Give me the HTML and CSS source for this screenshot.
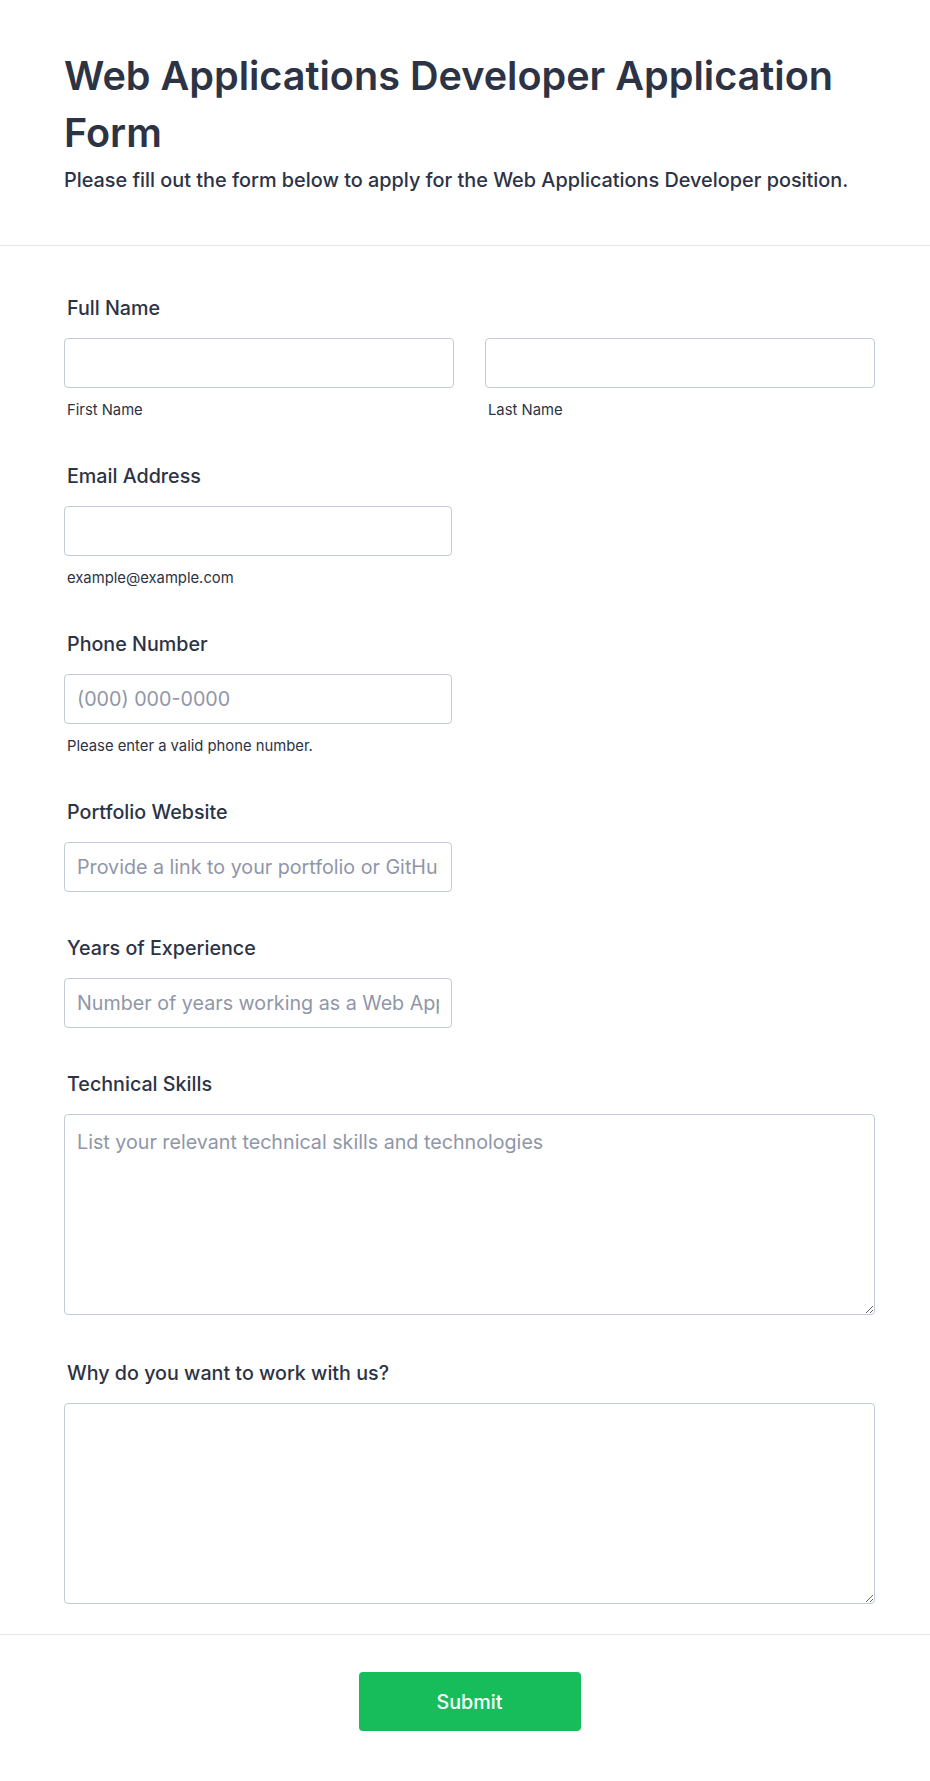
FILE: index.html
```html
<!DOCTYPE html>
<html lang="en">
<head>
<meta charset="utf-8">
<title>Web Applications Developer Application Form</title>
<link rel="stylesheet" href="styles.css">
</head>
<body>
<div class="page">
  <header class="header">
    <h1 class="title">Web Applications Developer Application Form</h1>
    <p class="subtitle">Please fill out the form below to apply for the Web Applications Developer position.</p>
  </header>
  <form class="form">
    <div class="field">
      <label class="label">Full Name</label>
      <div class="name-row">
        <div class="name-col">
          <input class="input" type="text">
          <span class="sublabel">First Name</span>
        </div>
        <div class="name-col">
          <input class="input" type="text">
          <span class="sublabel">Last Name</span>
        </div>
      </div>
    </div>
    <div class="field">
      <label class="label">Email Address</label>
      <input class="input half" type="email">
      <span class="sublabel">example@example.com</span>
    </div>
    <div class="field">
      <label class="label">Phone Number</label>
      <input class="input half" type="tel" placeholder="(000) 000-0000">
      <span class="sublabel">Please enter a valid phone number.</span>
    </div>
    <div class="field">
      <label class="label">Portfolio Website</label>
      <input class="input half" type="text" placeholder="Provide a link to your portfolio or GitHub profile">
    </div>
    <div class="field">
      <label class="label">Years of Experience</label>
      <input class="input half" type="text" placeholder="Number of years working as a Web Applications Developer">
    </div>
    <div class="field">
      <label class="label">Technical Skills</label>
      <textarea class="textarea" placeholder="List your relevant technical skills and technologies"></textarea>
    </div>
    <div class="field">
      <label class="label">Why do you want to work with us?</label>
      <textarea class="textarea"></textarea>
    </div>
  </form>
  <div class="footer">
    <button class="submit" type="button">Submit</button>
  </div>
</div>
</body>
</html>
```
FILE: styles.css
```css
* { box-sizing: border-box; }
html, body { margin: 0; padding: 0; background: #ffffff; }
body {
  font-family: Inter, "Noto Sans", "Liberation Sans", sans-serif;
  color: #2c3345;
}
.page { width: 930px; min-height: 1781px; background: #fff; }
.header {
  padding: 48px 55px 53px 64px;
  border-bottom: 1px solid #e3e5ee;
}
.title {
  margin: 0;
  font-size: 39.6px;
  line-height: 57px;
  font-weight: 600;
  color: #2c3345;
}
.subtitle {
  margin: 6px 0 0;
  font-size: 19.85px;
  line-height: 24px;
  font-weight: 500;
  color: #2c3345;
}
.form {
  padding: 50px 55px 28px 64px;
  display: flex;
  flex-direction: column;
  gap: 44px;
  border-bottom: 1px solid #e3e5ee;
}
.field { display: flex; flex-direction: column; align-items: flex-start; }
.label {
  font-size: 19.7px;
  line-height: 24px;
  font-weight: 500;
  color: #2c3345;
  margin: 0 0 18px 3px;
}
.name-row { display: flex; gap: 31px; width: 100%; }
.name-col { flex: 1; display: flex; flex-direction: column; }
.input {
  display: block;
  width: 100%;
  height: 50px;
  border: 1px solid #c3cad8;
  border-radius: 4px;
  padding: 0 12px;
  font-family: inherit;
  font-size: 19.7px;
  color: #2c3345;
  background: #fff;
  outline: none;
}
.input.half { width: 388px; }
.input::placeholder, .textarea::placeholder { color: #8f96a8; opacity: 1; }
.sublabel {
  margin: 12px 0 0 3px;
  font-size: 14.8px;
  line-height: 20px;
  color: #2c3345;
}
.textarea {
  display: block;
  width: 100%;
  height: 201px;
  margin-bottom: 2px;
  border: 1px solid #c3cad8;
  border-radius: 4px;
  padding: 12px 12px;
  font-family: inherit;
  font-size: 19.7px;
  line-height: 30px;
  color: #2c3345;
  background: #fff;
  resize: vertical;
  outline: none;
}
.footer {
  display: flex;
  justify-content: center;
  padding: 37px 55px 50px 64px;
}
.submit {
  width: 222px;
  height: 59px;
  border: none;
  border-radius: 4px;
  background: #18bd5b;
  color: #fff;
  font-family: inherit;
  font-size: 19.7px;
  font-weight: 500;
  cursor: pointer;
}
```
